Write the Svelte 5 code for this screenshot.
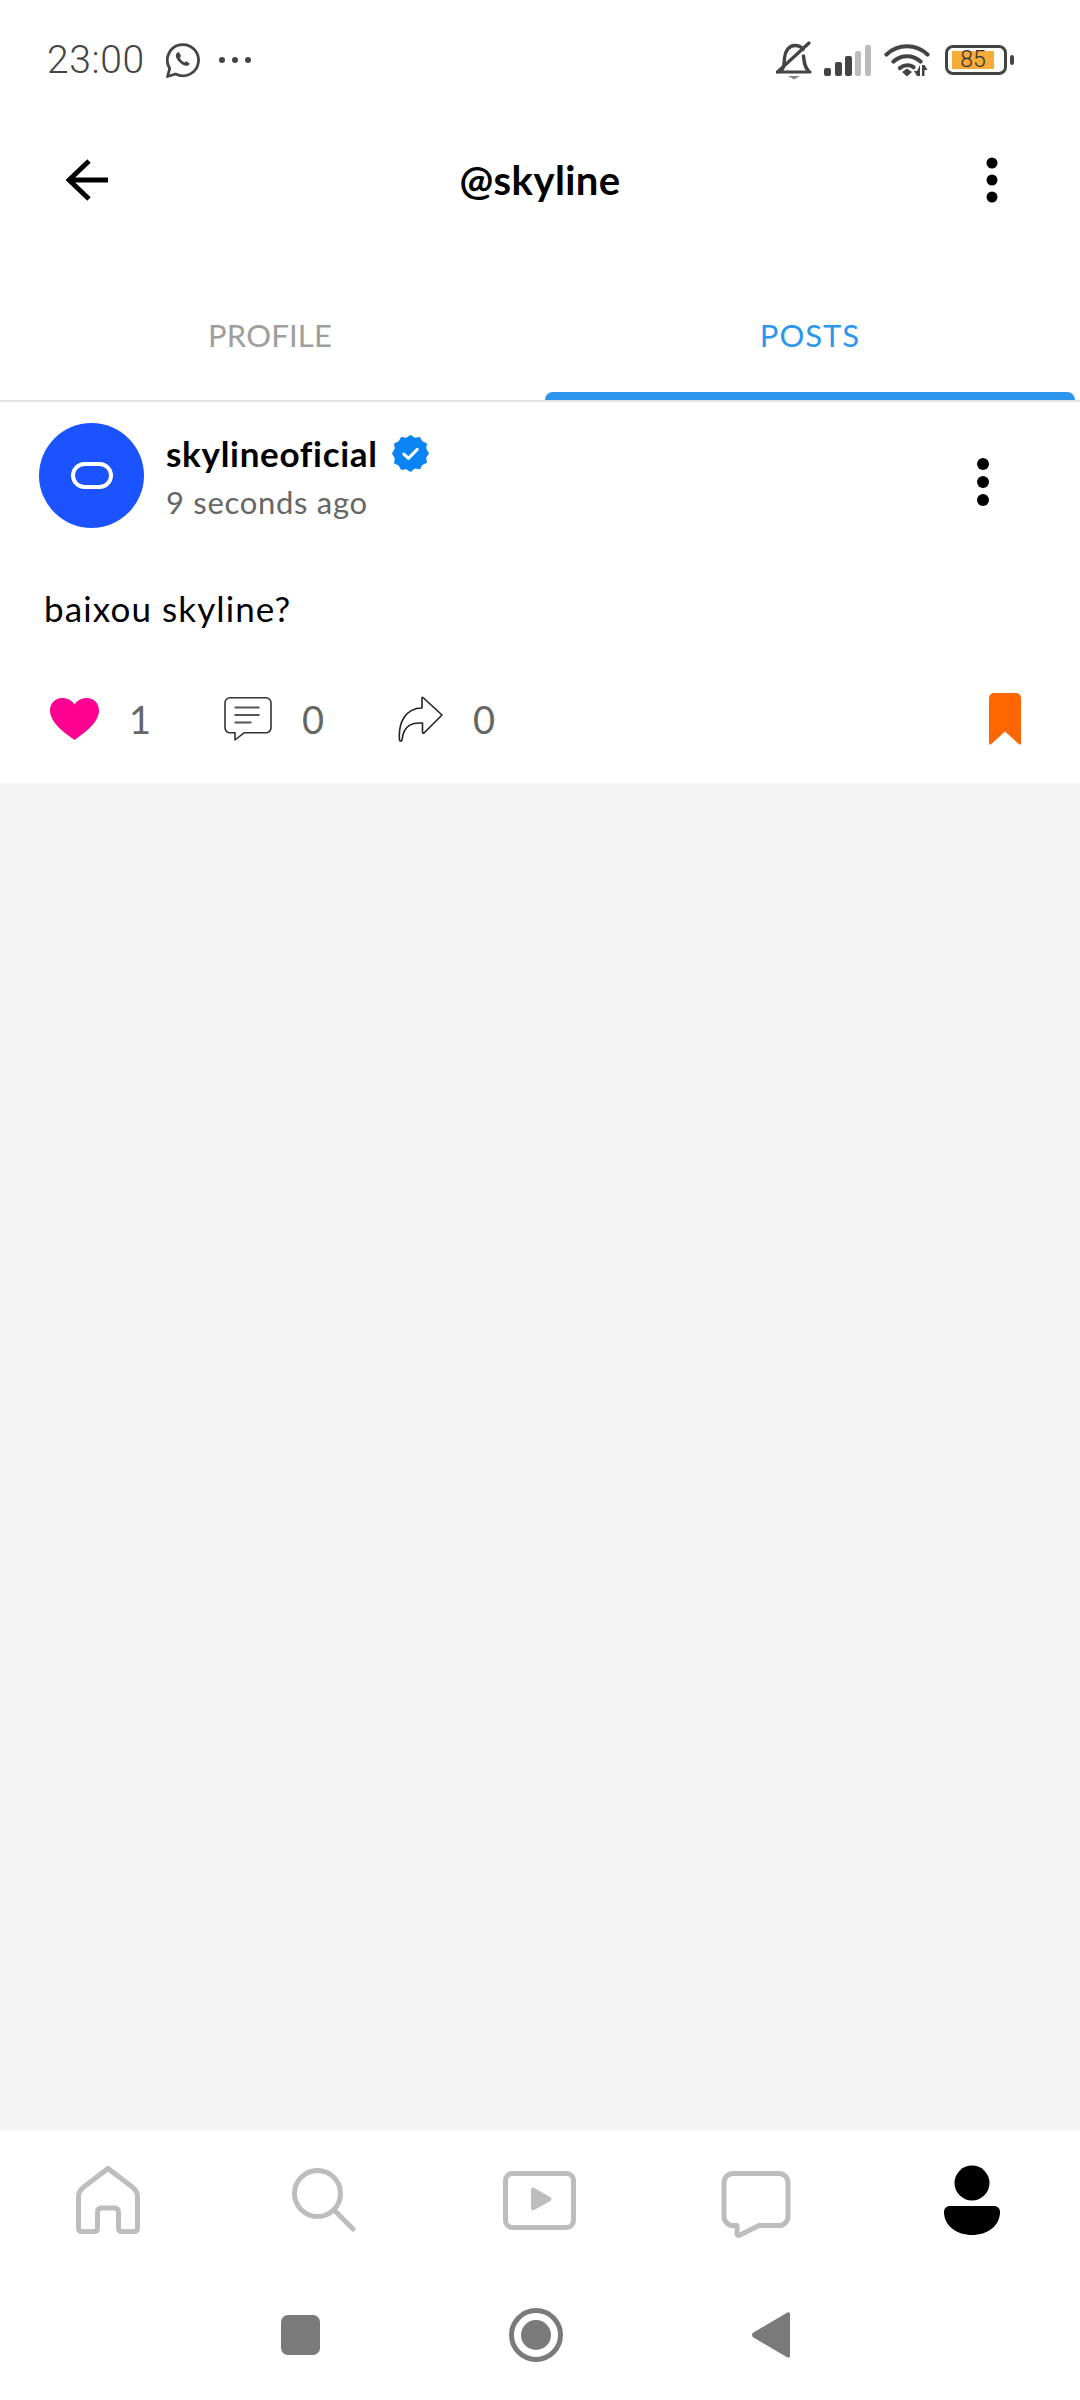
<script>
  const navIconColour = '#bdbdbd';
</script>

<div class="page">
  <div class="status">
    <span class="clock">23:00</span>
    <svg class="wa" width="34" height="35" viewBox="0 0 34 35">
      <path d="M1.5 33.5l2.2-8A15.6 15.6 0 1 1 9.6 31z" fill="none" stroke="#444" stroke-width="2.8" stroke-linejoin="round" />
      <path d="M11.5 9.5c-1.8 1.2-2.2 3.4-1 5.8 1.600 3.200 4.500 6 8 7.200 2.400.8 4.400.1 5.300-1.800l-3.500-2.500-2 1.300c-2-1-3.500-2.600-4.500-4.700l1.300-1.700-2-3.900z" fill="#444" />
    </svg>
    <svg class="more" width="32" height="6" viewBox="0 0 32 6">
      <circle cx="3" cy="3" r="3" fill="#444" />
      <circle cx="16" cy="3" r="3" fill="#444" />
      <circle cx="29" cy="3" r="3" fill="#444" />
    </svg>
    <div class="status-right">
      <svg width="36" height="39" viewBox="0 0 36 39">
        <path d="M5 30c3.500-3 3-8 3.500-13C9 10 13 4.500 19 4.500c4 0 6.500 1.500 8 4M27.500 15c.5 6 1 11 5 15" fill="none" stroke="#444" stroke-width="3.400" stroke-linecap="round" />
        <path d="M1.500 31L33 2" stroke="#444" stroke-width="3.200" stroke-linecap="round" />
        <path d="M1.500 31H34" stroke="#444" stroke-width="3.200" stroke-linecap="round" />
        <path d="M12 35h12l-6 3.500z" fill="#888" />
      </svg>
      <svg class="signal" width="48" height="31" viewBox="0 0 48 31">
        <rect x="0" y="23" width="7" height="8" rx="2" fill="#444" />
        <rect x="11" y="17" width="7" height="14" rx="2" fill="#444" />
        <rect x="21" y="11" width="7" height="20" rx="2" fill="#444" />
        <rect x="31" y="6" width="6" height="25" rx="2" fill="#bbb" />
        <rect x="41" y="0" width="6" height="31" rx="2" fill="#bbb" />
      </svg>
      <svg class="wifi" width="46" height="34" viewBox="0 0 46 34">
        <path d="M2.500 11.500C14 .5 32 .5 43.500 11.500M9.500 18.500C17 11.500 29 11.500 36.500 18.500" fill="none" stroke="#444" stroke-width="4.200" stroke-linecap="round" />
        <path d="M16 25c4-3.500 10-3.500 13.500-.8" fill="none" stroke="#444" stroke-width="4.200" stroke-linecap="round" />
        <path d="M18 29l5-3.500 5 3.500-5 4.500z" fill="#444" />
        <path d="M36 22v11h-3l-3-5h3zM38 33V22h2.500l3 5h-3v6z" fill="#444" />
      </svg>
      <div class="battery">
        <span class="battery-body"><span class="battery-fill">85</span></span>
        <span class="battery-nub"></span>
      </div>
    </div>
  </div>

  <div class="topbar">
    <svg class="back" width="44" height="44" viewBox="0 0 44 44">
      <path d="M42 22H3M23 3L3 22l20 19" fill="none" stroke="#000" stroke-width="5" stroke-linejoin="miter" />
    </svg>
    <span class="handle">@skyline</span>
    <svg class="kebab" width="12" height="46" viewBox="0 0 12 46">
      <circle cx="6" cy="6" r="5.500" />
      <circle cx="6" cy="23" r="5.500" />
      <circle cx="6" cy="40" r="5.500" />
    </svg>
  </div>

  <div class="tabs">
    <div class="tab">PROFILE</div>
    <div class="tab active">POSTS<span class="indicator"></span></div>
  </div>

  <div class="post">
    <div class="post-head">
      <div class="avatar"><span class="pill"></span></div>
      <div class="who">
        <div class="name-row">
          <span class="name">skylineoficial</span>
          <svg width="37" height="37" viewBox="0 0 36 36">
            <path d="M18 0l4.200 2.600 4.900-.7 2.400 4.300 4.500 2-.7 4.900 2.700 4.900-2.700 4.200.7 4.900-4.500 2-2.400 4.300-4.900-.7L18 36l-4.200-2.700-4.900.7-2.400-4.300-4.500-2 .7-4.900L0 18l2.700-4.900-.7-4.900 4.500-2 2.400-4.300 4.900.7z" fill="#0a84f5" />
            <path d="M11.500 18.500l4.500 4.200 8.500-8.700" fill="none" stroke="#fff" stroke-width="3" stroke-linecap="round" stroke-linejoin="round" />
          </svg>
        </div>
        <div class="ago">9 seconds ago</div>
      </div>
      <svg class="kebab post-kebab" width="12" height="48" viewBox="0 0 12 48">
        <circle cx="6" cy="6" r="6" />
        <circle cx="6" cy="24" r="6" />
        <circle cx="6" cy="42" r="6" />
      </svg>
    </div>

    <p class="body">baixou skyline?</p>

    <div class="actions">
      <svg class="heart" width="49" height="42" viewBox="0 0 49 42">
        <path d="M24.500 42C16 36 0 25 0 12.500 0 5 5.500 0 12 0c5.500 0 10 2.500 12.500 6.500C27 2.500 31.500 0 37 0c6.500 0 12 5 12 12.500C49 25 33 36 24.500 42z" fill="#ff0090" />
      </svg>
      <span class="count one">1</span>
      <svg class="comment" width="48" height="44" viewBox="0 0 48 44">
        <path d="M6 .8h36a5 5 0 0 1 5 5v25a5 5 0 0 1-5 5H20L11 43v-7.200H6a5 5 0 0 1-5-5v-25a5 5 0 0 1 5-5z" fill="none" stroke="#333" stroke-width="1.600" stroke-linejoin="round" />
        <path d="M10.500 10.500h25M10.500 18h25M10.500 25.500h17" stroke="#555" stroke-width="1.800" />
      </svg>
      <span class="count">0</span>
      <svg class="share" width="45" height="46" viewBox="0 0 45 46">
        <path d="M25 1.500L44 19 26 37c-1 .5-1.500 0-1.500-1V27c-9-.5-19 1-20.500 17-.5 1.500-2 1.500-2.500 0C0 26 8 12 24 12V2.500c0-1 .5-1.500 1-1z" fill="none" stroke="#222" stroke-width="1.600" stroke-linejoin="round" />
      </svg>
      <span class="count">0</span>
      <svg class="bookmark" width="32" height="52" viewBox="0 0 32 52">
        <path d="M5 0h22a5 5 0 0 1 5 5v45c0 1.500-1 2-2 1.200L16 38.500 2 51.200c-1 .8-2 .3-2-1.200V5a5 5 0 0 1 5-5z" fill="#ff6600" />
      </svg>
    </div>
  </div>

  <div class="feed"></div>

  <div class="bottom">
    <div class="nav">
      <svg class="nav-home" width="64" height="68" viewBox="0 0 64 68">
        <path d="M32 2.500L55 20c4 3 6.500 5.500 6.500 10v32c0 2-1 3.500-3.500 3.500H46c-2.500 0-3.500-1-3.500-3.500V46c0-3-1.500-4-4-4h-13c-2.500 0-4 1-4 4v16.500c0 2-1 3-3.500 3H6c-2.500 0-3.500-1.500-3.500-3.500V30c0-4.500 2.500-7 6.500-10z" fill="none" stroke={navIconColour} stroke-width="5" stroke-linejoin="round" />
      </svg>
      <svg class="nav-search" width="64" height="64" viewBox="0 0 64 64">
        <circle cx="25.500" cy="25.500" r="23" fill="none" stroke={navIconColour} stroke-width="5" />
        <path d="M42 42l19 19" stroke={navIconColour} stroke-width="5" stroke-linecap="round" />
      </svg>
      <svg class="nav-play" width="73" height="59" viewBox="0 0 73 59">
        <rect x="2.500" y="2.500" width="68" height="54" rx="7" fill="none" stroke={navIconColour} stroke-width="5" />
        <path d="M28 19c0-2 1.500-3 3-2.200l16 9.200c2 1.200 2 3 0 4.200l-16 8.800c-1.500.8-3 0-3-2z" fill={navIconColour} />
      </svg>
      <svg class="nav-chat" width="70" height="67" viewBox="0 0 70 67">
        <path d="M12 2.500h46a9 9 0 0 1 9 9v34a9 9 0 0 1-9 9H38L19 64c-1.500 1-3 .5-3-1.500v-8h-4a9 9 0 0 1-9-9v-34a9 9 0 0 1 9-9z" fill="none" stroke={navIconColour} stroke-width="5" stroke-linejoin="round" />
      </svg>
      <svg class="nav-person" width="56" height="70" viewBox="0 0 56 70">
        <circle cx="28" cy="18" r="17.500" />
        <path d="M6 41h44c3.500 0 6 2.500 6 6 0 14-13 23-28 23S0 61 0 47c0-3.500 2.500-6 6-6z" />
      </svg>
    </div>
    <div class="sysnav">
      <span class="sys-square"></span>
      <span class="sys-home"><span></span></span>
      <svg class="sys-back" width="38" height="46" viewBox="0 0 38 46">
        <path d="M35 .8c1.500-1 3-.3 3 1.500v41.400c0 1.800-1.500 2.500-3 1.500L1.500 25.500c-2-1.300-2-3.700 0-5z" fill="#7a7a7a" />
      </svg>
    </div>
  </div>
</div>

<style>
  :global(body) {
    margin: 0;
    background: #fff;
  }

  .page {
    width: 1080px;
    height: 2400px;
    display: flex;
    flex-direction: column;
    font-family: 'Lato', 'Noto Sans', sans-serif;
    color: #000;
  }

  .status {
    height: 120px;
    box-sizing: border-box;
    padding: 0 66px 0 47px;
    display: flex;
    align-items: center;
    color: #444;
  }

  .clock {
    font-family: 'Roboto', sans-serif;
    font-weight: 300;
    font-size: 39px;
    letter-spacing: 0.6px;
  }

  .wa {
    margin-left: 21px;
  }

  .more {
    margin-left: 19px;
  }

  .status-right {
    margin-left: auto;
    display: flex;
    align-items: center;
    gap: 12px;
  }

  .battery {
    display: flex;
    align-items: center;
    margin-left: 3px;
  }

  .battery-body {
    width: 62px;
    height: 30px;
    box-sizing: border-box;
    border: 3px solid #444;
    border-radius: 8px;
    display: flex;
    align-items: center;
    padding-left: 4px;
  }

  .battery-fill {
    width: 42px;
    height: 18px;
    background: #f7ac3a;
    font-family: 'Roboto', sans-serif;
    font-weight: 300;
    font-size: 23px;
    line-height: 18px;
    text-align: center;
    color: #333;
  }

  .battery-nub {
    width: 4px;
    height: 10px;
    margin-left: 3px;
    border-radius: 2px;
    background: #444;
  }

  .topbar {
    height: 120px;
    box-sizing: border-box;
    padding: 0 66px;
    display: grid;
    grid-template-columns: 1fr auto 1fr;
    align-items: center;
  }

  .topbar .kebab {
    justify-self: end;
    margin-right: 16px;
  }

  .handle {
    font-size: 40px;
    font-weight: 700;
    letter-spacing: 0.4px;
  }

  .tabs {
    height: 162px;
    display: grid;
    grid-template-columns: 1fr 1fr;
    border-bottom: 2px solid #e4e4e4;
    box-sizing: border-box;
  }

  .tab {
    position: relative;
    padding-top: 76px;
    text-align: center;
    font-size: 31px;
    letter-spacing: 0.2px;
    line-height: 38px;
    color: #9e9e9e;
  }

  .tab.active {
    color: #2b96ec;
    letter-spacing: 1px;
  }

  .indicator {
    position: absolute;
    left: 5px;
    right: 5px;
    bottom: 0;
    height: 8px;
    background: #2b96ec;
    border-radius: 8px 8px 0 0;
  }

  .post {
    height: 381px;
    box-sizing: border-box;
    background: #fff;
    padding: 21px 0 0 39px;
  }

  .post-head {
    display: flex;
    align-items: flex-start;
  }

  .avatar {
    width: 105px;
    height: 105px;
    border-radius: 50%;
    background: #1a53ff;
    display: flex;
    align-items: center;
    justify-content: center;
  }

  .pill {
    width: 42px;
    height: 27px;
    box-sizing: border-box;
    border: 4px solid #fff;
    border-radius: 14px;
  }

  .who {
    margin-left: 22px;
  }

  .name-row {
    display: flex;
    align-items: center;
    gap: 14px;
    height: 60px;
  }

  .name {
    font-size: 35px;
    font-weight: 700;
    letter-spacing: 0.7px;
  }

  .ago {
    font-size: 31px;
    letter-spacing: 0.7px;
    line-height: 38px;
    color: #666;
  }

  .post-kebab {
    margin-left: auto;
    margin-right: 91px;
    margin-top: 35px;
  }

  .body {
    margin: 58px 0 0 5px;
    font-size: 35px;
    letter-spacing: 1.1px;
    line-height: 44px;
  }

  .actions {
    display: flex;
    align-items: center;
    margin-top: 63px;
    padding-left: 11px;
    height: 52px;
  }

  .count {
    margin-left: 30px;
    font-size: 38px;
    color: #666;
    width: 22px;
  }

  .comment {
    margin-left: 73px;
  }

  .share {
    margin-left: 74px;
  }

  .bookmark {
    margin-left: auto;
    margin-right: 59px;
  }

  .feed {
    flex: 1;
    background: #f4f4f4;
  }

  .bottom {
    height: 270px;
    background: #fff;
  }

  .nav {
    height: 140px;
    box-sizing: border-box;
    padding-left: 76px;
    display: flex;
    align-items: center;
  }

  .nav-search {
    margin-left: 152px;
  }

  .nav-play {
    margin-left: 147px;
  }

  .nav-chat {
    margin-left: 145px;
    margin-top: 8px;
  }

  .nav-person {
    margin-left: 153px;
  }

  .sysnav {
    height: 130px;
    padding: 0 290px 0 281px;
    display: flex;
    align-items: center;
    justify-content: space-between;
  }

  .sys-square {
    width: 39px;
    height: 40px;
    border-radius: 7px;
    background: #7a7a7a;
  }

  .sys-home {
    width: 54px;
    height: 54px;
    box-sizing: border-box;
    border: 5px solid #7a7a7a;
    border-radius: 50%;
    display: flex;
    align-items: center;
    justify-content: center;
  }

  .sys-home span {
    width: 30px;
    height: 30px;
    border-radius: 50%;
    background: #7a7a7a;
  }
</style>
